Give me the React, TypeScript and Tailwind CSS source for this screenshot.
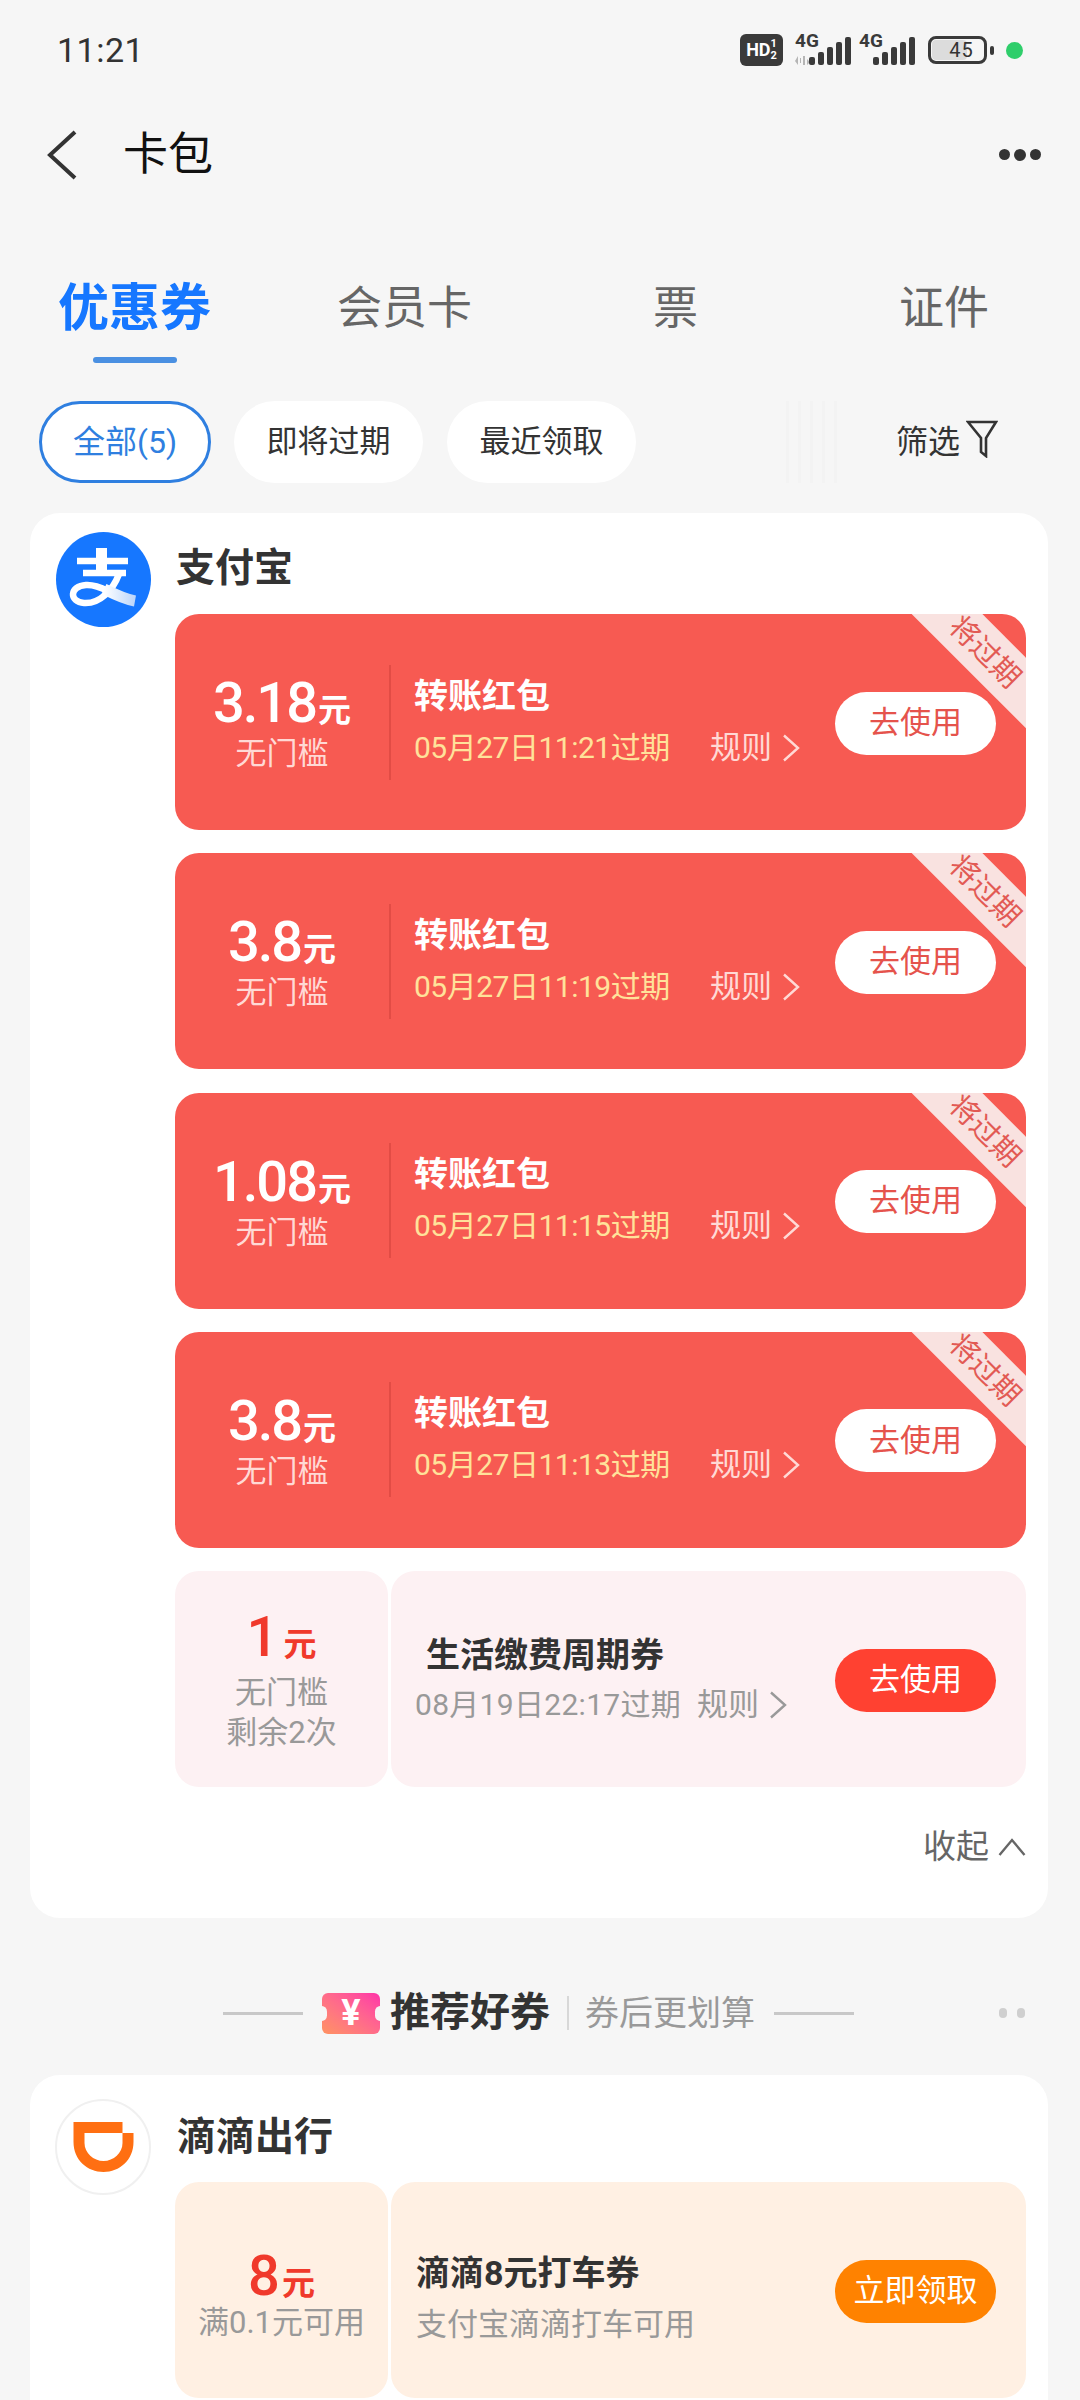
import React from "react";

interface Coupon {
  amount: string;
  expire: string;
}

const redCoupons: Coupon[] = [
  { amount: "3.18", expire: "05月27日11:21过期" },
  { amount: "3.8", expire: "05月27日11:19过期" },
  { amount: "1.08", expire: "05月27日11:15过期" },
  { amount: "3.8", expire: "05月27日11:13过期" },
];

const ChevronRight = ({ color }: { color: string }) => (
  <svg width="18" height="28" viewBox="0 0 18 28" fill="none" stroke={color} strokeWidth="2.4">
    <path d="M2 1.5 L16 14 L2 26.5" />
  </svg>
);

const Signal = () => (
  <svg width="42" height="28" viewBox="0 0 42 28" fill="#3a3a3a">
    <rect x="0" y="20" width="6" height="8" rx="2" />
    <rect x="9" y="15" width="6" height="13" rx="2" />
    <rect x="18" y="10" width="6" height="18" rx="2" />
    <rect x="27" y="5" width="6" height="23" rx="2" />
    <rect x="36" y="0" width="6" height="28" rx="2" />
  </svg>
);

const StatusBar = () => (
  <div className="flex items-center h-[100px] pl-[57px] pr-[57px] justify-between">
    <span className="text-[34px] leading-[40px] text-[#333] tracking-[0.5px]">11:21</span>
    <div className="flex items-center">
      <div className="flex items-center justify-center w-[43px] h-[32px] rounded-[6px] bg-[#3a3a3a] text-white font-bold text-[18px] leading-[18px]">
        HD<span className="text-[11px] leading-[12px] flex flex-col"><span>1</span><span>2</span></span>
      </div>
      <div className="relative w-[56px] h-[30px] ml-[12px]">
        <span className="absolute left-0 top-[-4px] text-[19px] leading-[20px] font-bold text-[#3a3a3a]">4G</span>
        <svg className="absolute left-0 bottom-0" width="15" height="9" viewBox="0 0 15 9" fill="#b5b5b5">
          <path d="M3 0 L3 9 L0 5 Z M5 2 H6 V7 H5 Z M10 0 L10 9 L8 9 L8 0 Z M12 3 L15 6 L12 9 Z" />
        </svg>
        <div className="absolute right-0 bottom-0 flex">
          <Signal />
        </div>
      </div>
      <div className="relative w-[56px] h-[30px] ml-[8px]">
        <span className="absolute left-0 top-[-4px] text-[19px] leading-[20px] font-bold text-[#3a3a3a]">4G</span>
        <div className="absolute right-0 bottom-0 flex">
          <Signal />
        </div>
      </div>
      <div className="relative ml-[13px] w-[59px] h-[28px] rounded-[8px] border-[3px] border-[#3a3a3a] flex items-center justify-center">
        <div className="absolute left-[1px] top-[1px] bottom-[1px] w-[35px] rounded-[4px] bg-[#dcdcdc]" />
        <span className="relative text-[20px] leading-[22px] text-[#333] tracking-[1px] pl-[8px]">45</span>
      </div>
      <div className="ml-[3px] w-[4px] h-[9px] rounded-[2px] bg-[#3a3a3a]" />
      <div className="ml-[12px] w-[17px] h-[17px] rounded-full bg-[#2fce6b]" />
    </div>
  </div>
);

const AlipayLogo = () => (
  <svg width="95" height="95" viewBox="0 0 95 95" fill="none">
    <defs>
      <linearGradient id="alipayTail" x1="0" y1="0" x2="1" y2="0">
        <stop offset="0" stopColor="#ffffff" />
        <stop offset="1" stopColor="#bcd6fa" />
      </linearGradient>
    </defs>
    <circle cx="47.5" cy="47.5" r="47.5" fill="#1677ff" />
    <path d="M21 29 H72" stroke="#fff" strokeWidth="6.5" />
    <path d="M45.5 16 V42" stroke="#fff" strokeWidth="11" />
    <path d="M27 41 H70" stroke="#fff" strokeWidth="6.5" />
    <path d="M63 42 C57 58 44 72 28 71 C13 70 13 54 30 53 C38 52.500 46 56 52 59" stroke="#fff" strokeWidth="6.5" />
    <path d="M48 57 C58 62 68 67 79 69" stroke="url(#alipayTail)" strokeWidth="11" />
  </svg>
);

const DidiLogo = () => (
  <div className="w-[96px] h-[96px] rounded-full bg-white border-2 border-[#f0f0f0] flex items-center justify-center shrink-0">
    <svg width="61" height="50" viewBox="0 0 60 50" fill="#ff6f12">
      <path
        fillRule="evenodd"
        d="M0 0 H49 V11 H60 V20 C60 38 46 50 30 50 C14 50 0 38 0 20 Z M11 11 V21 C11 31 20 39 30 39 C40 39 49 31 49 21 V11 Z"
      />
    </svg>
  </div>
);

const RedCoupon = ({ amount, expire }: Coupon) => (
  <div className="relative overflow-hidden flex items-center h-[216px] rounded-[24px] bg-[#f75a52]">
    <div className="w-[214px] shrink-0 flex flex-col items-center pt-[2px]">
      <div className="flex items-baseline text-white leading-[60px]">
        <span className="text-[56px] font-medium tracking-[-2px]">{amount}</span>
        <span className="ml-[2px] text-[33px] font-bold">元</span>
      </div>
      <span className="mt-[-6px] text-[31px] leading-[38px] text-[#ffd9d5]">无门槛</span>
    </div>
    <div className="w-[2px] h-[115px] bg-[#e24c45] shrink-0" />
    <div className="ml-[23px] flex flex-col flex-1 pb-[5px]">
      <span className="text-[34px] leading-[48px] font-bold text-white">转账红包</span>
      <div className="flex items-center mt-[8px]">
        <span className="w-[296px] text-[30px] tracking-[-0.5px] leading-[40px] text-[#ffe29a] whitespace-nowrap">{expire}</span>
        <span className="text-[31px] leading-[40px] text-[#ffd9d5]">规则</span>
        <span className="ml-[10px] flex">
          <ChevronRight color="#ffd9d5" />
        </span>
      </div>
    </div>
    <button className="mr-[30px] mt-[2px] w-[161px] h-[63px] rounded-full bg-white text-[31px] text-[#e5534c] shrink-0">
      去使用
    </button>
    <div className="absolute right-[-59px] top-[13px] w-[200px] h-[50px] rotate-45 bg-[#f9e2e0] flex items-center justify-center text-[29px] leading-[30px] text-[#e25a54]">
      将过期
    </div>
  </div>
);

const App = () => {
  return (
    <div className="w-[1080px] h-[2400px] overflow-hidden bg-[#f6f6f6] font-['Roboto','Noto_Sans_CJK_SC',sans-serif]">
      <StatusBar />

      <div className="flex items-center h-[54px] mt-[28px] pl-[46px] pr-[39px]">
        <svg width="32" height="50" viewBox="0 0 32 50" fill="none" stroke="#333" strokeWidth="4">
          <path d="M29 2 L4 25 L29 48" />
        </svg>
        <span className="ml-[45px] text-[45px] leading-[54px] text-[#111]">卡包</span>
        <div className="ml-auto flex gap-[4px]">
          <div className="w-[11px] h-[11px] rounded-full bg-[#333]" />
          <div className="w-[12px] h-[12px] rounded-full bg-[#333]" />
          <div className="w-[11px] h-[11px] rounded-full bg-[#333]" />
        </div>
      </div>

      <div className="relative h-[64px] mt-[95px] text-[45px] leading-[64px] text-[#666]">
        <div className="flex">
          <span className="ml-[58px] w-[156px] text-[51px] font-bold text-[#1677ff] whitespace-nowrap">优惠券</span>
          <span className="ml-[123px] w-[140px]">会员卡</span>
          <span className="ml-[176px] w-[60px]">票</span>
          <span className="ml-[186px]">证件</span>
        </div>
        <div className="absolute left-[93px] top-[80px] w-[84px] h-[6px] rounded-full bg-[#4a90e2]" />
      </div>

      <div className="flex items-center h-[82px] mt-[60px] pl-[39px] text-[31px] text-[#333]">
        <div className="w-[172px] h-[82px] rounded-full bg-white border-[3px] border-[#2f7fe0] flex items-center justify-center text-[#2f7fe0] text-[32px]">
          全部(5)
        </div>
        <div className="ml-[23px] w-[189px] h-[82px] rounded-full bg-white flex items-center justify-center">即将过期</div>
        <div className="ml-[24px] w-[189px] h-[82px] rounded-full bg-white flex items-center justify-center">最近领取</div>
        <div className="ml-[150px] w-[56px] h-[82px] bg-[repeating-linear-gradient(90deg,#f3f3f3_0px,#f3f3f3_3px,#f6f6f6_3px,#f6f6f6_12px)]" />
        <span className="ml-[54px] text-[32px]">筛选</span>
        <svg className="ml-[6px] mb-[6px]" width="32" height="38" viewBox="0 0 32 38" fill="none" stroke="#333" strokeWidth="2.6">
          <path d="M2 2 H30 L20 18 V36 L15 32 V18 Z" />
        </svg>
      </div>

      <div className="ml-[30px] mr-[32px] mt-[30px] h-[1405px] rounded-[30px] bg-white pl-[26px] pr-[22px] pt-[19px]">
        <div className="flex">
          <AlipayLogo />
          <span className="ml-[25px] mt-[10px] text-[39px] leading-[52px] font-bold text-[#333]">支付宝</span>
        </div>
        <div className="ml-[119px] mt-[-13px] flex flex-col gap-[23.25px]">
          {redCoupons.map((coupon, i) => (
            <RedCoupon key={i} amount={coupon.amount} expire={coupon.expire} />
          ))}
          <div className="flex h-[216px] gap-[3px]">
            <div className="w-[213px] rounded-[24px] bg-[#fdf1f3] flex flex-col items-center justify-center pt-[4px]">
              <div className="flex items-baseline text-[#f0392b] leading-[56px]">
                <span className="text-[56px] font-medium">1</span>
                <span className="ml-[5px] text-[33px] font-bold">元</span>
              </div>
              <span className="text-[31px] leading-[40px] text-[#999]">无门槛</span>
              <span className="text-[31px] leading-[40px] text-[#999]">剩余2次</span>
            </div>
            <div className="flex-1 rounded-[24px] bg-[#fdf1f3] flex items-center">
              <div className="ml-[24px] flex flex-col flex-1 pb-[3px]">
                <span className="ml-[11px] text-[34px] leading-[48px] font-bold text-[#333]">生活缴费周期券</span>
                <div className="flex items-center mt-[6px] text-[30px] leading-[40px] text-[#999]">
                  <span className="w-[282px] whitespace-nowrap tracking-[0.3px]">08月19日22:17过期</span>
                  <span className="text-[31px]">规则</span>
                  <span className="ml-[10px] flex">
                    <ChevronRight color="#999" />
                  </span>
                </div>
              </div>
              <button className="mr-[30px] mt-[2px] w-[161px] h-[63px] rounded-full bg-[#ff4131] text-[31px] text-white shrink-0">
                去使用
              </button>
            </div>
          </div>
        </div>
        <div className="flex items-center justify-end mt-[38px] text-[33px] leading-[44px] text-[#666]">
          收起
          <svg className="ml-[9px]" width="28" height="20" viewBox="0 0 28 20" fill="none" stroke="#666" strokeWidth="2.4">
            <path d="M1.5 18 L14 3 L26.5 18" />
          </svg>
        </div>
      </div>

      <div className="flex items-center h-[50px] mt-[70px] pl-[223px]">
        <div className="w-[80px] h-[3px] bg-[#c8c8c8]" />
        <div className="relative overflow-hidden ml-[19px] w-[58px] h-[41px] rounded-[6px] bg-gradient-to-tr from-[#ff9260] to-[#ff30a8] flex items-center justify-center text-white font-bold text-[36px] leading-[41px]">
          ¥
          <div className="absolute left-[-6px] top-[13px] w-[11px] h-[15px] rounded-full bg-[#f6f6f6]" />
          <div className="absolute right-[-6px] top-[13px] w-[11px] h-[15px] rounded-full bg-[#f6f6f6]" />
        </div>
        <span className="ml-[10px] text-[40px] leading-[50px] font-bold text-[#333]">推荐好券</span>
        <div className="ml-[17px] w-[2px] h-[34px] bg-[#d8d8d8]" />
        <span className="ml-[16px] text-[34px] leading-[50px] text-[#999]">券后更划算</span>
        <div className="ml-[19px] w-[80px] h-[3px] bg-[#c8c8c8]" />
        <div className="ml-[145px] flex gap-[10px]">
          <div className="w-[8px] h-[10px] rounded-full bg-[#cfcfcf]" />
          <div className="w-[8px] h-[10px] rounded-full bg-[#cfcfcf]" />
        </div>
      </div>

      <div className="ml-[30px] mr-[32px] mt-[37px] h-[400px] rounded-[30px] bg-white pl-[25px] pr-[22px] pt-[24px]">
        <div className="flex">
          <DidiLogo />
          <span className="ml-[26px] mt-[12px] text-[39px] leading-[52px] font-bold text-[#333]">滴滴出行</span>
        </div>
        <div className="ml-[120px] mt-[-13px] flex h-[216px] gap-[3px]">
          <div className="w-[213px] rounded-[24px] bg-[#fff0e3] flex flex-col items-center justify-center pt-[9px]">
            <div className="flex items-baseline text-[#f0392b] leading-[58px]">
              <span className="text-[56px] font-medium">8</span>
              <span className="ml-[2px] text-[33px] font-bold">元</span>
            </div>
            <span className="mt-[-10px] text-[31px] leading-[40px] text-[#999] whitespace-nowrap">满0.1元可用</span>
          </div>
          <div className="flex-1 rounded-[24px] bg-[#fff0e3] flex items-center">
            <div className="ml-[25px] flex flex-col flex-1 pt-[14px]">
              <span className="text-[34px] leading-[48px] font-bold text-[#333]">滴滴8元打车券</span>
              <span className="mt-[8px] text-[31px] leading-[40px] text-[#999]">支付宝滴滴打车可用</span>
            </div>
            <button className="mr-[30px] mt-[2px] w-[161px] h-[63px] rounded-full bg-[#ff8200] text-[31px] text-white shrink-0">
              立即领取
            </button>
          </div>
        </div>
      </div>
    </div>
  );
};

export default App;
